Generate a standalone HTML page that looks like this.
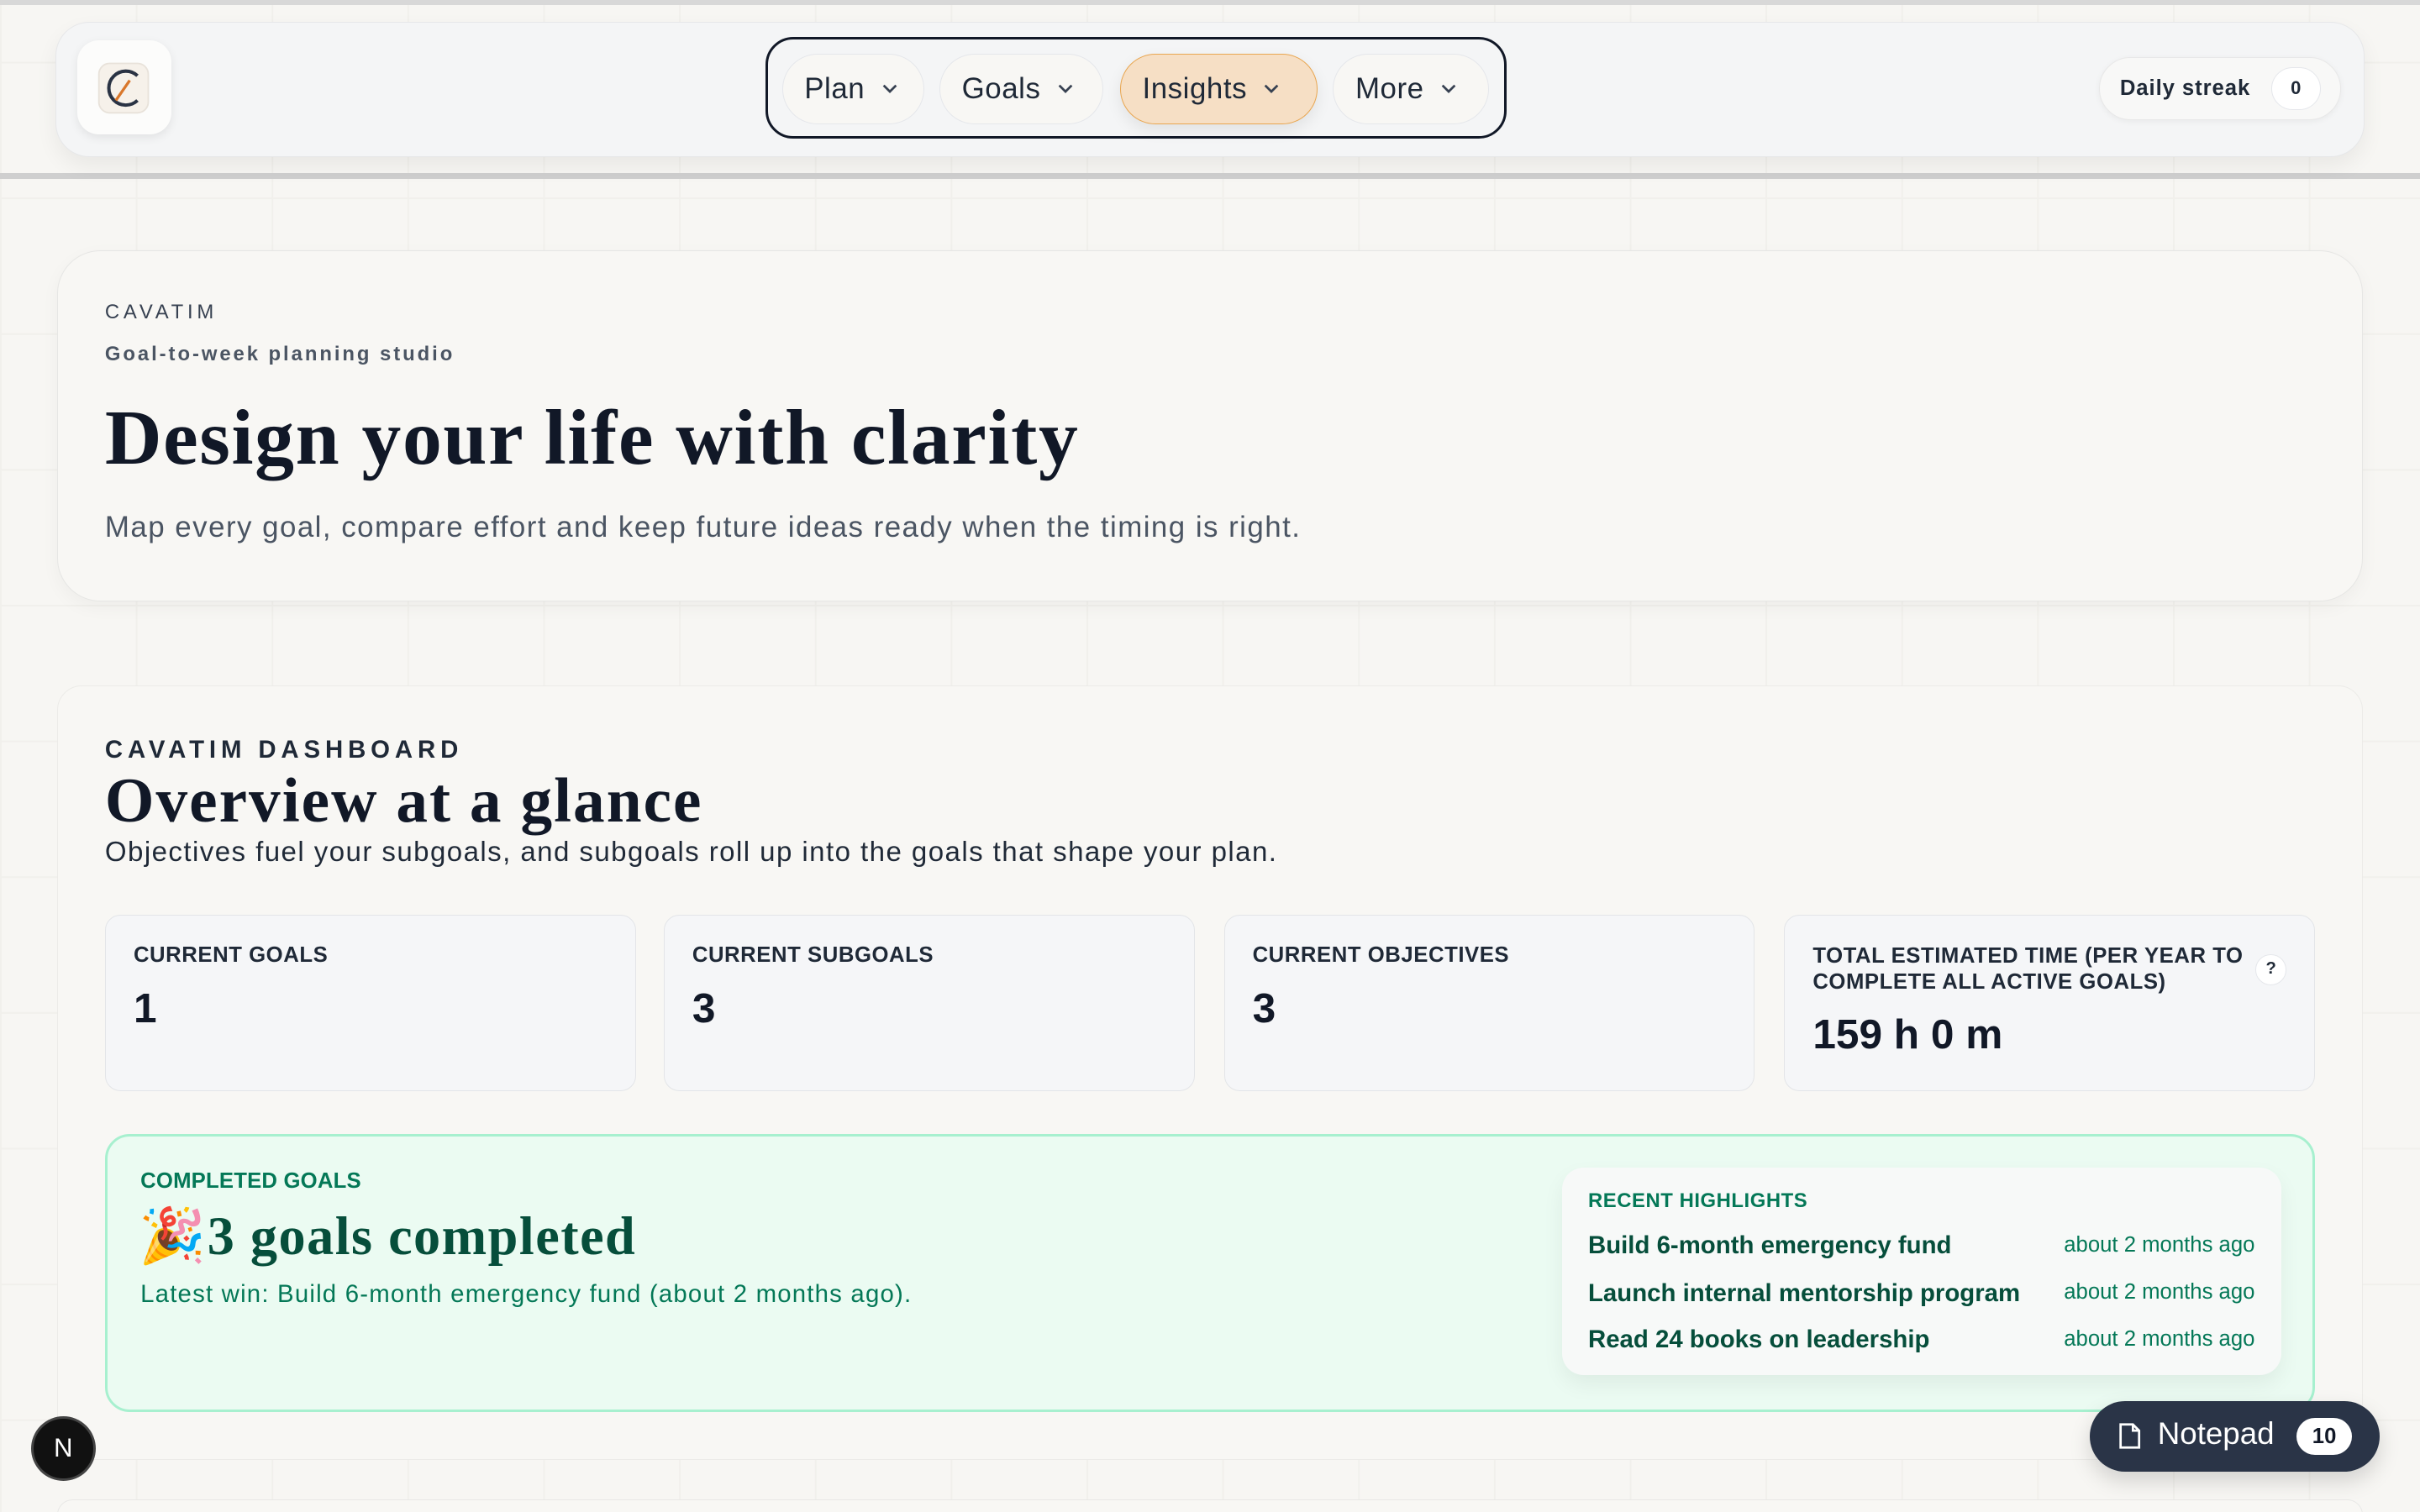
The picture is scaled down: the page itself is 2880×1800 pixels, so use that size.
<!DOCTYPE html>
<html><head><meta charset="utf-8"><style>
*{box-sizing:border-box;margin:0;padding:0}
html,body{width:2880px;height:1800px;overflow:hidden;background:#f7f6f3}
#r{zoom:1.836735;position:relative;width:1568px;height:980px;font-family:"Liberation Sans",sans-serif;color:#1f2937;
background-color:#f7f6f3;background-image:linear-gradient(#f1f0ec 1px,transparent 1px),linear-gradient(90deg,#f1f0ec 1px,transparent 1px);background-size:88px 88px;background-position:0 40px}
.a{position:absolute}
.serif{font-family:"Liberation Serif",serif;font-weight:700}
.pill{position:absolute;top:9px;height:46px;border:1px solid #e5e7eb;border-radius:23px;background:#f8f7f4;font-size:19px;color:#1f2937;display:flex;align-items:center;padding-left:14px;letter-spacing:.3px}
.pill svg{margin-left:10px}
.card{position:absolute;top:593px;width:344px;height:114px;background:#f5f6f8;border:1px solid #e3e5e8;border-radius:10px}
.card .l{position:absolute;left:18px;top:18px;font-size:14px;font-weight:700;color:#1f2937;letter-spacing:.3px}
.card .v{position:absolute;left:18px;top:44px;font-size:27px;font-weight:700;color:#111827}
.hl{position:absolute;left:17px;font-size:16px;font-weight:700;color:#064e3b}
.ht{position:absolute;right:17px;font-size:14px;color:#047857}
</style></head><body><div id="r">
<div class="a" style="left:0;top:0;width:1568px;height:3px;background:#d8d8d8"></div>
<div class="a" style="left:0;top:112px;width:1568px;height:4px;background:#cfcfcf"></div>
<div class="a" style="left:36px;top:14px;width:1496px;height:88px;background:#f4f5f6;border:1px solid #e6e7e9;border-radius:22px;box-shadow:0 6px 14px rgba(0,0,0,.06)"></div>
<div class="a" style="left:50px;top:26px;width:61px;height:61px;background:#fcfcfb;border-radius:14px;box-shadow:0 2px 6px rgba(0,0,0,.08)">
<svg class="a" style="left:12px;top:12px" width="37" height="37" viewBox="0 0 37 37"><rect x="2" y="3" width="32" height="32" rx="7" fill="#f6f1ea" stroke="#e8e2da"/><path d="M27 11 A11 11 0 1 0 27 27" fill="none" stroke="#2a3344" stroke-width="2.2"/><path d="M13 27 L22 14" stroke="#d9772b" stroke-width="1.8"/></svg></div>
<div class="a" style="left:496px;top:24px;width:480px;height:66px;border:2px solid #111827;border-radius:18px">
<div class="pill" style="left:9px;width:92px">Plan<svg width="12" height="8" viewBox="0 0 12 8"><path d="M2 2l4 4 4-4" fill="none" stroke="#374151" stroke-width="1.5"/></svg></div>
<div class="pill" style="left:111px;width:106px">Goals<svg width="12" height="8" viewBox="0 0 12 8"><path d="M2 2l4 4 4-4" fill="none" stroke="#374151" stroke-width="1.5"/></svg></div>
<div class="pill" style="left:228px;width:128px;background:#f6dfc5;border-color:#e9a650;box-shadow:0 4px 10px rgba(0,0,0,.08)">Insights<svg width="12" height="8" viewBox="0 0 12 8"><path d="M2 2l4 4 4-4" fill="none" stroke="#374151" stroke-width="1.5"/></svg></div>
<div class="pill" style="left:366px;width:101px">More<svg width="12" height="8" viewBox="0 0 12 8"><path d="M2 2l4 4 4-4" fill="none" stroke="#374151" stroke-width="1.5"/></svg></div>
</div>
<div class="a" style="left:1360px;top:37px;width:157px;height:41px;background:#f8f8f7;border:1px solid #e8e8e8;border-radius:21px;box-shadow:0 1px 4px rgba(0,0,0,.05)">
<span class="a" style="left:13px;top:12px;font-size:14px;font-weight:700;letter-spacing:.5px;color:#1f2937">Daily streak</span>
<span class="a" style="left:111px;top:6px;width:32px;height:28px;border-radius:14px;background:#fff;border:1px solid #e5e7eb;font-size:12px;font-weight:700;text-align:center;line-height:26px">0</span></div>

<div class="a" style="left:37px;top:162px;width:1494px;height:228px;background:#f8f7f4;border:1px solid #e6e6e4;border-radius:28px;box-shadow:0 4px 12px rgba(0,0,0,.04)"></div>
<div class="a" style="left:68px;top:195px;font-size:13px;letter-spacing:2.6px;color:#374151">CAVATIM</div>
<div class="a" style="left:68px;top:222px;font-size:13px;letter-spacing:1.6px;font-weight:700;color:#4b5563">Goal-to-week planning studio</div>
<div class="a serif" style="left:68px;top:255px;font-size:51px;color:#111827;letter-spacing:.9px">Design your life with clarity</div>
<div class="a" style="left:68px;top:331px;font-size:19px;color:#4b5563;letter-spacing:.8px">Map every goal, compare effort and keep future ideas ready when the timing is right.</div>

<div class="a" style="left:37px;top:444px;width:1494px;height:502px;background:#f8f7f4;border:1px solid #ecebe8;border-radius:16px"></div>
<div class="a" style="left:68px;top:477px;font-size:16px;letter-spacing:3.2px;font-weight:700;color:#1f2937">CAVATIM DASHBOARD</div>
<div class="a serif" style="left:68px;top:496px;font-size:41px;color:#111827;letter-spacing:1.1px">Overview at a glance</div>
<div class="a" style="left:68px;top:542px;font-size:18px;color:#1f2937;letter-spacing:.78px">Objectives fuel your subgoals, and subgoals roll up into the goals that shape your plan.</div>

<div class="card" style="left:68px"><div class="l">CURRENT GOALS</div><div class="v">1</div></div>
<div class="card" style="left:430px"><div class="l">CURRENT SUBGOALS</div><div class="v">3</div></div>
<div class="card" style="left:793px"><div class="l">CURRENT OBJECTIVES</div><div class="v">3</div></div>
<div class="card" style="left:1156px"><div class="l" style="line-height:17px">TOTAL ESTIMATED TIME (PER YEAR TO<br>COMPLETE ALL ACTIVE GOALS)</div><div class="v" style="top:61px">159 h 0 m</div>
<span class="a" style="right:18px;top:25px;width:20px;height:20px;border-radius:10px;border:1px solid #e5e7eb;background:#fff;font-size:11px;font-weight:700;text-align:center;line-height:18px">?</span></div>

<div class="a" style="left:68px;top:735px;width:1432px;height:180px;background:#ebfbf2;border:2px solid #a7f0cf;border-radius:16px"></div>
<div class="a" style="left:91px;top:758px;font-size:14px;font-weight:700;color:#047857;letter-spacing:.1px">COMPLETED GOALS</div>
<div class="a serif" style="left:90px;top:780px;font-size:35px;color:#064e3b;letter-spacing:.8px">🎉3 goals completed</div>
<div class="a" style="left:91px;top:830px;font-size:16px;color:#047857;letter-spacing:.65px">Latest win: Build 6-month emergency fund (about 2 months ago).</div>
<div class="a" style="left:1012px;top:757px;width:466px;height:134px;background:#f7f9f8;border-radius:14px;box-shadow:0 6px 14px rgba(0,0,0,.06)">
<div class="a" style="left:17px;top:14px;font-size:13px;font-weight:700;color:#047857;letter-spacing:.3px">RECENT HIGHLIGHTS</div>
<div class="hl" style="top:41px">Build 6-month emergency fund</div><div class="ht" style="top:42px">about 2 months ago</div>
<div class="hl" style="top:72px">Launch internal mentorship program</div><div class="ht" style="top:73px">about 2 months ago</div>
<div class="hl" style="top:102px">Read 24 books on leadership</div><div class="ht" style="top:103px">about 2 months ago</div>
</div>

<div class="a" style="left:37px;top:972px;width:1494px;height:20px;background:#f8f7f4;border:1px solid #e8e8e6;border-radius:16px"></div>
<div class="a" style="left:1354px;top:908px;width:188px;height:46px;background:#2a3447;border-radius:23px;box-shadow:0 6px 14px rgba(0,0,0,.15)">
<svg class="a" style="left:18px;top:14px" width="16" height="18" viewBox="0 0 16 18"><path d="M2 1.5h8l4 4v11H2z M10 1.5v4h4" fill="none" stroke="#fff" stroke-width="1.5"/></svg>
<span class="a" style="left:44px;top:10px;font-size:20px;color:#fff">Notepad</span>
<span class="a" style="left:134px;top:11px;width:36px;height:24px;border-radius:12px;background:#fff;color:#111827;font-size:14px;font-weight:700;text-align:center;line-height:24px">10</span></div>
<div class="a" style="left:20px;top:918px;width:42px;height:42px;border-radius:21px;background:#111;border:2px solid #444;color:#fff;font-size:17px;text-align:center;line-height:38px">N</div>
</div></body></html>
